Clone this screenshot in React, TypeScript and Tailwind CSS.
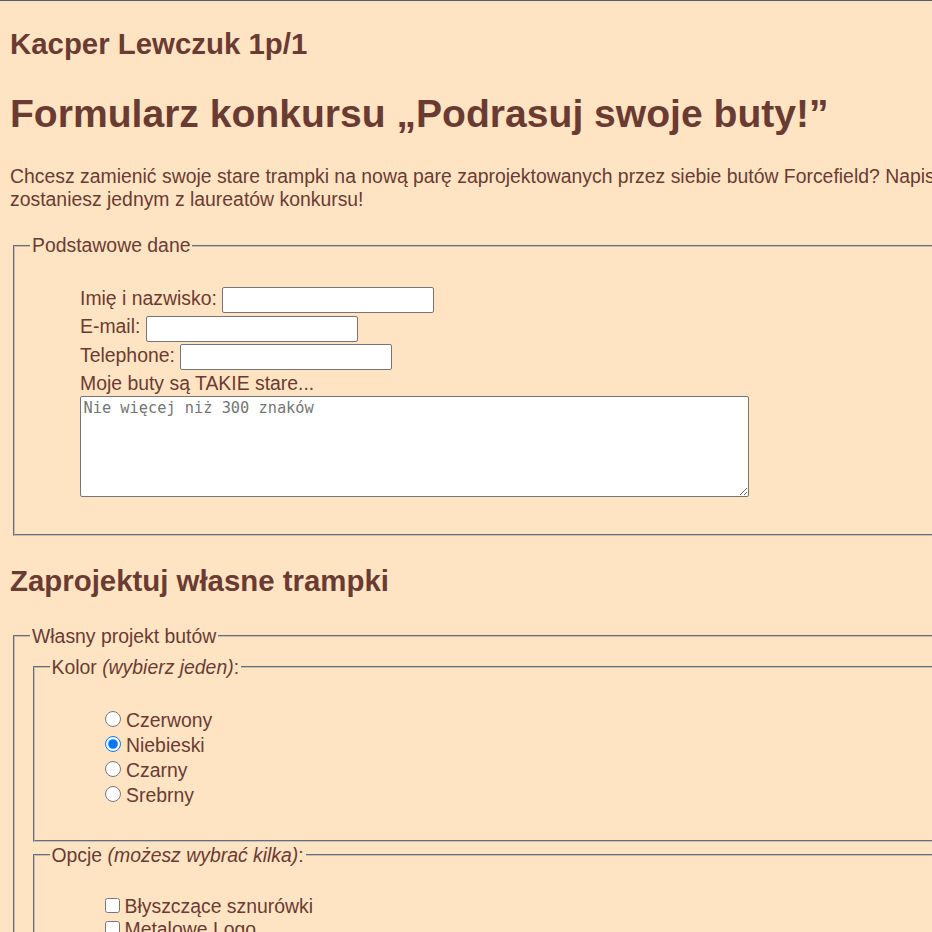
import { ReactNode } from "react";

interface BoxProps {
  legend: ReactNode;
  children: ReactNode;
  className?: string;
}

function Box({ legend, children, className = "" }: BoxProps) {
  return (
    <fieldset
      className={`[border-width:2px] [border-style:groove] border-[#c0c0c0] px-[15px] pt-[7px] pb-[12px] ${className}`}
    >
      <legend className="px-[2px] text-[19.4px] leading-[23px]">{legend}</legend>
      {children}
    </fieldset>
  );
}

function Field({ label }: { label: string }) {
  return (
    <div className="flex h-[28.5px] items-center">
      <span className="pb-[4px]">{label}</span>
      <input
        type="text"
        className="ml-[5.5px] h-[26px] w-[212px] rounded-[2px] border border-[#767676] bg-white"
      />
    </div>
  );
}

const colors = ["Czerwony", "Niebieski", "Czarny", "Srebrny"];
const options = ["Błyszczące sznurówki", "Metalowe Logo", "Podświetlana podeszwa"];

export default function App() {
  return (
    <div className="min-h-screen w-full overflow-hidden border-t border-[#565e69] bg-[#ffe4c4] font-['Liberation_Sans',Arial,sans-serif] text-[19.4px] leading-[23px] text-[#6b3b32]">
      <div className="w-[1400px] px-[10px] pb-[60px]">
        <h2 className="mt-[26px] text-[29.4px] font-bold leading-[34px]">Kacper Lewczuk 1p/1</h2>
        <h1 className="mt-[30px] text-[39.1px] font-bold leading-[46px]">
          Formularz konkursu „Podrasuj swoje buty!”
        </h1>
        <p className="mt-[28px]">
          Chcesz zamienić swoje stare trampki na nową parę zaprojektowanych przez siebie butów Forcefield? Napisz nam, dlaczego właśnie Ty, a być może
          <br />
          zostaniesz jednym z laureatów konkursu!
        </p>

        <Box legend="Podstawowe dane" className="mt-[23px] ml-[3px]">
          <div className="mt-[22px] mb-[25px] pl-[50px]">
            <Field label="Imię i nazwisko:" />
            <Field label="E-mail:" />
            <Field label="Telephone:" />
            <div>Moje buty są TAKIE stare...</div>
            <textarea
              placeholder="Nie więcej niż 300 znaków"
              className="mt-[1px] block h-[101px] w-[669px] rounded-[2px] border border-[#767676] bg-white p-[2.5px] font-['DejaVu_Sans_Mono',monospace] text-[15.3px] leading-[18px] placeholder:text-[#757575]"
            />
          </div>
        </Box>

        <h2 className="mt-[28px] text-[29.4px] font-bold leading-[34px]">Zaprojektuj własne trampki</h2>

        <Box legend="Własny projekt butów" className="mt-[27px] ml-[3px] pt-[8px]">
          <Box
            legend={
              <>
                Kolor <i>(wybierz jeden)</i>:
              </>
            }
            className="ml-[2.5px]"
          >
            <div className="mt-[22px] mb-[20px] pl-[50px]">
              {colors.map((c) => (
                <label key={c} className="flex h-[25px] items-center">
                  <input
                    type="radio"
                    name="kolor"
                    defaultChecked={c === "Niebieski"}
                    className="mb-[3px] ml-[5.5px] mr-[5px] h-[16px] w-[16px]"
                  />
                  {c}
                </label>
              ))}
            </div>
          </Box>
          <Box
            legend={
              <>
                Opcje <i>(możesz wybrać kilka)</i>:
              </>
            }
            className="mt-[2px] ml-[2.5px]"
          >
            <div className="mt-[21px] mb-[20px] pl-[50px]">
              {options.map((o) => (
                <label key={o} className="flex h-[23px] items-center">
                  <input
                    type="checkbox"
                    className="mb-[2px] ml-[5px] mr-[5px] h-[15px] w-[15px]"
                  />
                  {o}
                </label>
              ))}
            </div>
          </Box>
        </Box>
      </div>
    </div>
  );
}
